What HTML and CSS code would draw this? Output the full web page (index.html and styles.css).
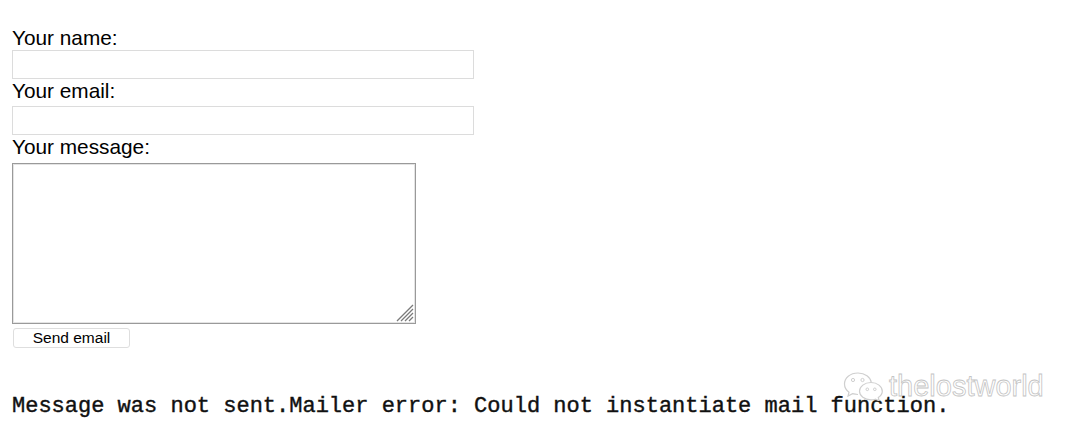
FILE: index.html
```html
<!DOCTYPE html>
<html>
<head>
<meta charset="utf-8">
<link rel="stylesheet" href="styles.css">
</head>
<body>
<form class="mail-form">
  <label class="field-label" for="name">Your name:</label>
  <input class="text-input" id="name" type="text">
  <label class="field-label" for="email">Your email:</label>
  <input class="text-input" id="email" type="text">
  <label class="field-label msg-label" for="message">Your message:</label>
  <div class="area-wrap">
    <textarea class="text-area" id="message"></textarea>
    <svg class="grip" width="18" height="18" viewBox="0 0 18 18"><path d="M17 1 L1 17 M17 5 L5 17 M17 9 L9 17 M17 13 L13 17" stroke="#7a7a7a" stroke-width="1.3" fill="none"/></svg>
  </div>
  <button class="send-btn" type="button">Send email</button>
</form>
<p class="error-msg">Message was not sent.Mailer error: Could not instantiate mail function.</p>
<div class="watermark">
  <svg class="wm-logo" width="44" height="30" viewBox="0 0 44 30">
    <path d="M15 2 C7 2 1.5 7 1.5 13 C1.5 16.5 3.3 19.3 6 21.2 L5 25 L9.5 22.7 C11.2 23.2 13 23.5 15 23.5" fill="none" stroke="#cfcfcf" stroke-width="1.2"/>
    <path d="M15 2 C22 2 27.5 6 28.3 11.3" fill="none" stroke="#cfcfcf" stroke-width="1.2"/>
    <circle cx="10" cy="9" r="1.6" fill="none" stroke="#cfcfcf" stroke-width="1"/>
    <circle cx="19.5" cy="9" r="1.6" fill="none" stroke="#cfcfcf" stroke-width="1"/>
    <path d="M28 11.5 C21.5 11.5 16.5 15.5 16.5 20.3 C16.5 25 21.5 28.8 28 28.8 C29.6 28.8 31 28.6 32.3 28.2 L36.2 29.8 L35.3 26.6 C37.7 25 39.3 22.8 39.3 20.3 C39.3 15.5 34.3 11.5 28 11.5 Z" fill="#fff" stroke="#cfcfcf" stroke-width="1.2"/>
    <circle cx="24.3" cy="18.3" r="1.3" fill="none" stroke="#cfcfcf" stroke-width="1"/>
    <circle cx="31.8" cy="18.3" r="1.3" fill="none" stroke="#cfcfcf" stroke-width="1"/>
  </svg>
  <span class="wm-text">thelostworld</span>
</div>
</body>
</html>
```
FILE: styles.css
```css
html, body {
  margin: 0;
  padding: 0;
  background: #ffffff;
}
body {
  position: relative;
  width: 1080px;
  height: 433px;
  overflow: hidden;
  font-family: "Liberation Sans", Arial, sans-serif;
  color: #000;
}
.mail-form {
  display: flex;
  flex-direction: column;
  align-items: flex-start;
  padding: 26px 0 0 12px;
}
.field-label {
  display: block;
  font-size: 20.8px;
  line-height: 23px;
  height: 23px;
  padding-bottom: 4px;
}
.field-label:first-child {
  height: 24px;
  padding-bottom: 0;
}
.msg-label {
  height: 24px;
  padding-bottom: 4px;
}
.text-input {
  box-sizing: border-box;
  width: 462px;
  height: 29px;
  margin: 0;
  border: 1px solid #dcdcdc;
  background: #fff;
  outline: none;
  padding: 0;
}
.area-wrap {
  position: relative;
  width: 404px;
  height: 161px;
}
.text-area {
  box-sizing: border-box;
  width: 404px;
  height: 161px;
  margin: 0;
  border: 1px solid #9a9a9a;
  box-shadow: inset 0 0 0 1px #e4e4e4;
  resize: none;
  outline: none;
  padding: 0;
  display: block;
}
.grip {
  position: absolute;
  right: 2px;
  bottom: 2px;
}
.send-btn {
  box-sizing: border-box;
  margin: 4px 0 0 1px;
  width: 117px;
  height: 20px;
  padding: 0;
  border: 1px solid #dedede;
  border-radius: 3px;
  background: #fff;
  font-family: "Liberation Sans", Arial, sans-serif;
  font-size: 15.5px;
  line-height: 18px;
  color: #000;
}
.error-msg {
  margin: 46px 0 0 12px;
  font-family: "Liberation Mono", "Courier New", monospace;
  font-size: 22px;
  line-height: 26px;
  white-space: nowrap;
  color: #111;
  -webkit-text-stroke: 0.4px #111;
}
.watermark {
  position: absolute;
  left: 843px;
  top: 371px;
  display: flex;
  align-items: center;
  gap: 2px;
}
.wm-text {
  font-family: "Liberation Sans", Arial, sans-serif;
  font-size: 29px;
  line-height: 30px;
  color: #ffffff;
  -webkit-text-stroke: 0.8px #c4c4c4;
}
```
